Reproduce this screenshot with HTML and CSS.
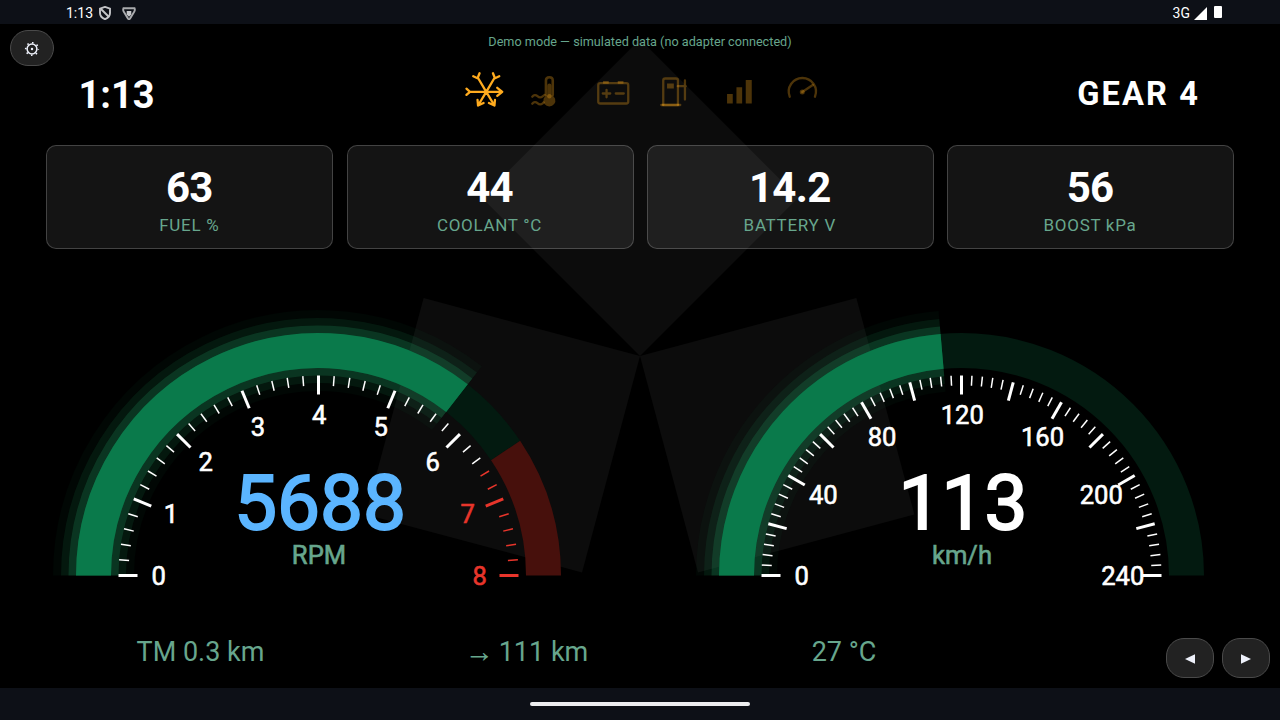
FILE: index.html
```
<!DOCTYPE html>
<html lang="en">
<head>
    <meta charset="UTF-8">
    <meta name="viewport" content="width=device-width, initial-scale=1.0">
    <title>Dashboard</title>
    <link rel="stylesheet" href="styles.css">
</head>
<body>

    <div class="statusbar">
        <span class="status-time">1:13</span>
        <svg class="status-shield" width="12" height="14" viewBox="0 0 12 14">
            <path d="M6 .9 11 2.600V7c0 3-2 5-5 6.200C3 12 1 10 1 7V2.600Z" fill="none" stroke="#c4c5c8" stroke-width="1.900"/>
            <path d="M2 3 10 11" stroke="#c4c5c8" stroke-width="1.900"/>
        </svg>
        <svg class="status-vpn" width="14" height="13" viewBox="0 0 14 13">
            <path d="M1.500 1.200h11q.8 1.800-.3 3.600L8 11.600q-1 1-2 0L1.800 4.800q-1.100-1.800-.3-3.600Z" fill="none" stroke="#a9aaad" stroke-width="1.900"/>
            <path d="M4.700 4h4.600v3.500L7 9.700 4.700 7.500Z" fill="#c4c5c8"/>
        </svg>
        <span class="status-net">3G</span>
        <svg class="status-signal" width="13" height="13" viewBox="0 0 13 13"><path d="M13 0V13H0Z" fill="#fff"/></svg>
        <svg width="8" height="12" viewBox="0 0 8 12"><rect width="8" height="12" rx="1" fill="#fff"/></svg>
    </div>

    <div class="app">
        <svg class="emblem" width="1280" height="664" viewBox="0 24 1280 664">
            <g fill="#0c0c0c">
                <path id="blade" d="M640 356 481.600 197.600 640 39.200 798.400 197.600Z"/>
                <use href="#blade" transform="rotate(120 640 356)"/>
                <use href="#blade" transform="rotate(240 640 356)"/>
            </g>
        </svg>

        <button class="round-btn settings" aria-label="Settings">
            <svg width="16" height="16" viewBox="0 0 16 16">
                <circle cx="8" cy="8" r="4.900" fill="none" stroke="#eef1fb" stroke-width="1.500"/>
                <circle cx="8" cy="8" r="6.300" fill="none" stroke="#eef1fb" stroke-width="1.600" stroke-dasharray="1.500 3.448" stroke-dashoffset=".75"/>
                <circle cx="8" cy="8" r="1.200" fill="#eef1fb"/>
            </svg>
        </button>
        <div class="notice">Demo mode — simulated data (no adapter connected)</div>

        <div class="topbar">
            <div class="clock">1:13</div>
            <svg class="lamps" width="400" height="50" viewBox="439.250 68.500 400 50">
                <g class="lamp on">
                    <path d="M486.500 92.300H470M466.700 89.200 470.200 92.300 466.700 95.400M486.500 92.300H502.500M497.500 88.300 502.500 92.300 497.500 96.300"/>
                    <path d="M486.500 92.300 478 78M473.500 76.700 477.800 78.700 479.800 73.700M486.500 92.300 495 78M499.500 76.700 495.200 78.700 493.200 73.700"/>
                    <path d="M486.500 92.300 478.300 106M477.800 100.500 478.300 106 483.800 103.500M486.500 92.300 494.700 106M495.200 100.500 494.700 106 489.200 103.500"/>
                </g>
                <g class="lamp">
                    <path d="M546.200 95.500V81q0-3.300 3.400-3.300T553 81v14.500" stroke-width="2.600"/>
                    <path class="fill" d="M549.600 84a2 2 0 0 1 2 2v9.400a6 6 0 1 1-4 0V86a2 2 0 0 1 2-2Z"/>
                    <circle class="fill" cx="549.600" cy="96.800" r="2.200"/>
                    <path d="M532.500 97.200q2.600-3 5.200-.6t5.200.3l2-1.500M532.500 104.200q2.600-3 5.200-.6t5.200.3l1-1"/>
                </g>
                <g class="lamp">
                    <rect x="598.500" y="83.700" width="30" height="20.300" rx="2"/>
                    <path class="fill" d="M603.300 81.500h5.700v2.700h-5.700zM618 81.500h5.700v2.700H618z"/>
                    <path d="M603 94h7.500M606.800 90.300v7.500M616 94h8"/>
                </g>
                <g class="lamp">
                    <path d="M663.500 105.300V81q0-2 2-2h10.700q2 0 2 2v24.300"/>
                    <path d="M661.500 105.500h19"/>
                    <path d="M663 105.500h15.500"/>
                    <path class="fill" d="M667.300 84h6.800v5h-6.800z"/>
                    <path d="M678 86.700h8M685.200 81v19"/>
                </g>
                <g class="lamp">
                    <path class="fill" d="M727.300 94.500h5.700v9.500h-5.700zM736.700 87.700h5.700V104h-5.700zM746 80.500h6V104h-6z"/>
                </g>
                <g class="lamp">
                    <path d="M790 97.200A13.600 13.600 0 1 1 815.200 97.200"/>
                    <path d="M802.500 92.500 813 85.500"/>
                    <circle class="fill" cx="802.500" cy="92.500" r="2.500"/>
                </g>
            </svg>
            <div class="gear">GEAR 4</div>
        </div>

        <div class="cards">
            <div class="card"><div class="value">63</div><div class="label">FUEL %</div></div>
            <div class="card"><div class="value">44</div><div class="label">COOLANT °C</div></div>
            <div class="card"><div class="value">14.2</div><div class="label">BATTERY V</div></div>
            <div class="card"><div class="value">56</div><div class="label">BOOST kPa</div></div>
        </div>

        <div class="gauges">
            <svg class="gauge" id="rpm" width="540" height="300" viewBox="0 0 540 300"></svg>
            <svg class="gauge" id="speed" width="540" height="300" viewBox="0 0 540 300"></svg>
        </div>

        <div class="footer">
            <span>TM 0.3 km</span>
            <span><span class="arrow">→</span> 111 km</span>
            <span>27 °C</span>
            <div class="pager">
                <button class="round-btn page" aria-label="Previous"><svg width="10" height="10" viewBox="0 0 10 10"><path d="M10 .2V9.800L0 5Z" fill="#eef1fb"/></svg></button>
                <button class="round-btn page" aria-label="Next"><svg width="10" height="10" viewBox="0 0 10 10"><path d="M0 .2V9.800L10 5Z" fill="#eef1fb"/></svg></button>
            </div>
        </div>
    </div>

    <div class="navbar"><div class="handle"></div></div>

    <script>
        const CX = 270.5, CY = 275.5, R = 225;

        // Point on the dial, t = 0 (left) .. 1 (right)
        function point(t, r) {
            const a = Math.PI * (1 - t);
            return [CX + r * Math.cos(a), CY - r * Math.sin(a)];
        }

        function arc(from, to, cls) {
            const [x1, y1] = point(from, R);
            const [x2, y2] = point(to, R);
            return `<path class="${cls}" d="M${x1} ${y1}A${R} ${R} 0 0 1 ${x2} ${y2}"/>`;
        }

        function drawGauge(id, g) {
            const pos = g.value / g.max;
            const redAt = g.red ? g.red / g.max : 1;
            let out = arc(0, redAt, 'track');
            if (g.red) out += arc(redAt, 1, 'track-red');
            out += arc(0, pos, 'glow glow3') + arc(0, pos, 'glow glow2') + arc(0, pos, 'glow glow1') + arc(0, pos, 'bar');

            const steps = g.max / g.major * 5;
            for (let i = 0; i <= steps; i++) {
                const t = i / steps;
                const big = i % 5 === 0;
                const [x1, y1] = point(t, 200);
                const [x2, y2] = point(t, big ? 181 : 190);
                const red = g.red && t >= redAt ? ' red' : '';
                out += `<line class="tick${big ? ' big' : ''}${red}" x1="${x1}" y1="${y1}" x2="${x2}" y2="${y2}"/>`;
            }
            for (let v = 0; v <= g.max; v += g.labelStep) {
                const [x, y] = point(v / g.max, 160.5);
                const red = g.red && v >= g.red ? ' red' : '';
                out += `<text class="num${red}" x="${x + 0.8}" y="${y + 9.1}">${v / g.scale}</text>`;
            }
            out += `<text class="big-value ${id}" x="${CX + 1.5}" y="229">${g.text}</text>`;
            out += `<text class="unit" x="${CX + 0.5}" y="263.500">${g.unit}</text>`;
            document.getElementById(id).innerHTML = out;
        }

        drawGauge('rpm', { value: 5688, text: '5688', max: 8000, red: 6500, major: 1000, labelStep: 1000, scale: 1000, unit: 'RPM' });
        drawGauge('speed', { value: 113.4, text: '113', max: 240, major: 20, labelStep: 40, scale: 1, unit: 'km/h' });
    </script>

</body>
</html>
```
FILE: styles.css
```
* {
    box-sizing: border-box;
}
body {
    margin: 0;
    width: 1280px;
    height: 720px;
    overflow: hidden;
    background: #000;
    color: #fff;
    font-family: Roboto, "Liberation Sans", sans-serif;
}
svg {
    display: block;
}
.statusbar {
    display: flex;
    align-items: center;
    height: 24px;
    padding: 2px 58px 0 66px;
    background: #0d1017;
    font-size: 14px;
}
.status-shield {
    margin-left: 6px;
}
.status-vpn {
    margin-left: 11px;
}
.status-net {
    margin-left: auto;
}
.status-signal {
    margin: 0 7px 0 4px;
}
.status-signal + svg {
    margin-bottom: 2px;
}
.app {
    position: relative;
    display: flex;
    flex-direction: column;
    height: 664px;
}
.emblem {
    position: absolute;
    left: 0;
    top: 0;
    z-index: -1;
}
.round-btn {
    display: flex;
    align-items: center;
    justify-content: center;
    padding: 0;
    background: #222;
    border: 1px solid #4a4a4a;
    border-radius: 18px;
}
.settings {
    position: absolute;
    left: 10px;
    top: 6px;
    width: 44px;
    height: 36px;
    padding-top: 2px;
}
.notice {
    position: absolute;
    left: 0;
    top: 10px;
    width: 100%;
    text-align: center;
    font-size: 12.67px;
    line-height: 16px;
    color: #67a68d;
}
.topbar {
    display: grid;
    grid-template-columns: 1fr 400px 1fr;
    align-items: center;
    height: 121px;
    padding: 20px 80px 0 78.5px;
}
.clock {
    font-size: 38px;
    font-weight: 700;
}
.lamps {
    margin-bottom: 3px;
}
.gear {
    margin-bottom: 1px;
    text-align: right;
    font-size: 32.6px;
    font-weight: 700;
    letter-spacing: 2.1px;
}
.lamp {
    fill: none;
    stroke: rgba(255, 171, 30, 0.3);
    stroke-width: 2.3px;
    stroke-linecap: round;
    stroke-linejoin: round;
}
.lamp .fill {
    fill: rgba(255, 171, 30, 0.3);
    stroke: none;
}
.lamp.on {
    stroke: #ffab1e;
}
.cards {
    display: grid;
    grid-template-columns: repeat(4, 1fr);
    gap: 13.3px;
    height: 104px;
    padding: 0 46px 0 46.3px;
}
.card {
    padding: 17px 1px 0 0;
    text-align: center;
    background: rgba(255, 255, 255, 0.08);
    border: 1px solid rgba(255, 255, 255, 0.2);
    border-radius: 10px;
}
.value {
    font-size: 42px;
    font-weight: 700;
    line-height: 49px;
    letter-spacing: -0.7px;
}
.label {
    margin-top: 3px;
    font-size: 17px;
    line-height: 20px;
    letter-spacing: 0.7px;
    color: #67a68d;
}
.gauges {
    display: flex;
    gap: 103px;
    margin-top: 51px;
    padding-left: 48px;
}
.gauge {
    flex: none;
    overflow: visible;
}
.gauge path {
    fill: none;
    stroke-width: 35px;
}
.gauge .track {
    stroke: #031a10;
}
.gauge .track-red {
    stroke: #47100c;
}
.gauge .bar {
    stroke: #0a7a4b;
}
.gauge .glow {
    stroke: #1d8a57;
}
.gauge .glow1 {
    stroke-width: 50px;
    stroke-opacity: 0.26;
}
.gauge .glow2 {
    stroke-width: 65px;
    stroke-opacity: 0.13;
}
.gauge .glow3 {
    stroke-width: 81px;
    stroke-opacity: 0.05;
}
.tick {
    stroke: #fff;
    stroke-width: 1.5px;
}
.tick.big {
    stroke-width: 3px;
}
.tick.red {
    stroke: #e8352b;
}
.gauge text {
    text-anchor: middle;
    fill: #fff;
    stroke: #fff;
    stroke-width: 0.6px;
}
.gauge .num {
    font-size: 25.6px;
}
.gauge .num.red {
    fill: #e8352b;
    stroke: #e8352b;
}
.gauge .big-value {
    font-size: 76.5px;
    stroke-width: 2px;
}
.gauge .big-value.rpm {
    fill: #5bb5ff;
    stroke: #5bb5ff;
}
.gauge .unit {
    fill: #67a68d;
    stroke: #67a68d;
    font-size: 25.6px;
}
.footer {
    display: grid;
    grid-template-columns: 321px 336px 294px 1fr;
    align-items: center;
    height: 88px;
    padding: 0 10px 0 40px;
    text-align: center;
    font-size: 27px;
    line-height: 32px;
    color: #67a68d;
}
.footer > span {
    margin-top: 16px;
}
.arrow {
    margin-right: 3px;
    font-family: "Noto Sans Math", "Noto Sans Symbols", "Liberation Serif", serif;
    font-size: 19px;
    line-height: 0;
    vertical-align: -1px;
}
.pager {
    display: flex;
    justify-content: flex-end;
    gap: 8px;
    margin-top: 28px;
}
.page {
    width: 48px;
    height: 40px;
    padding-top: 2px;
}
.navbar {
    display: flex;
    align-items: center;
    justify-content: center;
    height: 32px;
    background: #0d1017;
}
.handle {
    width: 220px;
    height: 4px;
    border-radius: 2px;
    background: #ededf0;
}
```
